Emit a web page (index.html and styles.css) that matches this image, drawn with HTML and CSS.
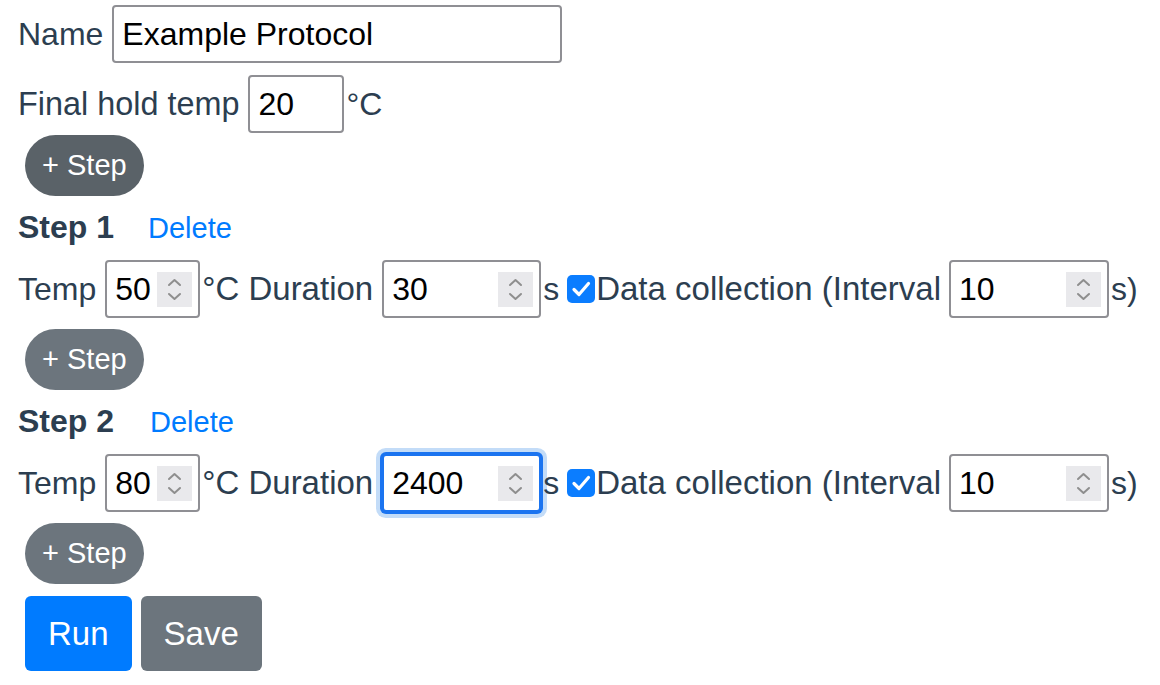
FILE: index.html
```html
<!DOCTYPE html>
<html lang="en">
<head>
<meta charset="utf-8">
<title>Protocol editor</title>
<link rel="stylesheet" href="styles.css">
</head>
<body>
<div class="app">
  <div class="row first">
    <span class="label">Name</span>
    <span class="field field-name"><input class="field-input" type="text" value="Example Protocol"></span>
  </div>
  <div class="row">
    <span class="label label-hold">Final hold temp</span>
    <span class="field field-hold"><input class="field-input" type="text" value="20"></span>
    <span class="unit">°C</span>
  </div>
  <button class="btn-step btn-step-active">+ Step</button>

  <div class="step">
    <div class="step-head">
      <span class="step-title">Step 1</span>
      <button class="btn-link">Delete</button>
    </div>
    <div class="row">
      <span class="label">Temp</span>
      <span class="field field-temp"><input class="field-input" type="text" value="50"><span class="spin"><svg viewBox="0 0 35 35" width="35" height="35"><path d="M12 13 L17.5 8 L23 13 M12 22 L17.5 27 L23 22" fill="none" stroke="#8e8e8e" stroke-width="2" stroke-linecap="round" stroke-linejoin="round"/></svg></span></span>
      <span class="unit unit-wide">°C Duration</span>
      <span class="field field-dur"><input class="field-input" type="text" value="30"><span class="spin"><svg viewBox="0 0 35 35" width="35" height="35"><path d="M12 13 L17.5 8 L23 13 M12 22 L17.5 27 L23 22" fill="none" stroke="#8e8e8e" stroke-width="2" stroke-linecap="round" stroke-linejoin="round"/></svg></span></span>
      <span class="unit">s</span>
      <span class="check"><svg viewBox="0 0 28 28" width="28" height="28"><path d="M7 14.5 L12 19.5 L21.5 8.5" fill="none" stroke="#fff" stroke-width="3.2" stroke-linecap="round" stroke-linejoin="round"/></svg></span>
      <span class="unit unit-wide unit-tight">Data collection (Interval</span>
      <span class="field field-int"><input class="field-input" type="text" value="10"><span class="spin"><svg viewBox="0 0 35 35" width="35" height="35"><path d="M12 13 L17.5 8 L23 13 M12 22 L17.5 27 L23 22" fill="none" stroke="#8e8e8e" stroke-width="2" stroke-linecap="round" stroke-linejoin="round"/></svg></span></span>
      <span class="unit">s)</span>
    </div>
    <button class="btn-step">+ Step</button>
  </div>

  <div class="step">
    <div class="step-head">
      <span class="step-title">Step 2</span>
      <button class="btn-link btn-link-2">Delete</button>
    </div>
    <div class="row">
      <span class="label">Temp</span>
      <span class="field field-temp"><input class="field-input" type="text" value="80"><span class="spin"><svg viewBox="0 0 35 35" width="35" height="35"><path d="M12 13 L17.5 8 L23 13 M12 22 L17.5 27 L23 22" fill="none" stroke="#8e8e8e" stroke-width="2" stroke-linecap="round" stroke-linejoin="round"/></svg></span></span>
      <span class="unit unit-wide">°C Duration</span>
      <span class="field field-dur field-focus"><input class="field-input" type="text" value="2400"><span class="spin"><svg viewBox="0 0 35 35" width="35" height="35"><path d="M12 13 L17.5 8 L23 13 M12 22 L17.5 27 L23 22" fill="none" stroke="#8e8e8e" stroke-width="2" stroke-linecap="round" stroke-linejoin="round"/></svg></span></span>
      <span class="unit">s</span>
      <span class="check"><svg viewBox="0 0 28 28" width="28" height="28"><path d="M7 14.5 L12 19.5 L21.5 8.5" fill="none" stroke="#fff" stroke-width="3.2" stroke-linecap="round" stroke-linejoin="round"/></svg></span>
      <span class="unit unit-wide unit-tight">Data collection (Interval</span>
      <span class="field field-int"><input class="field-input" type="text" value="10"><span class="spin"><svg viewBox="0 0 35 35" width="35" height="35"><path d="M12 13 L17.5 8 L23 13 M12 22 L17.5 27 L23 22" fill="none" stroke="#8e8e8e" stroke-width="2" stroke-linecap="round" stroke-linejoin="round"/></svg></span></span>
      <span class="unit">s)</span>
    </div>
    <button class="btn-step">+ Step</button>
  </div>

  <div class="actions">
    <button class="btn btn-primary">Run</button>
    <button class="btn btn-secondary">Save</button>
  </div>
</div>
</body>
</html>
```

FILE: styles.css
```css
* {
  box-sizing: border-box;
}

html, body {
  margin: 0;
  background: #ffffff;
}

body {
  font-family: "Liberation Sans", Arial, sans-serif;
  font-size: 32px;
  color: #2c3e50;
}

.app {
  padding: 5px 0 0 18px;
  display: flex;
  flex-direction: column;
  align-items: flex-start;
}

.row {
  display: flex;
  align-items: center;
  height: 58px;
  margin-top: 12px;
  white-space: nowrap;
}

.row.first {
  margin-top: 0;
}

.label {
  margin-right: 9px;
}

.label-hold {
  font-size: 32.4px;
}

.unit {
  margin-left: 2px;
}

.unit-wide {
  font-size: 33px;
}

.unit-tight {
  margin-left: 1px;
}

.field {
  display: flex;
  align-items: center;
  height: 58px;
  border: 2px solid #8f8f94;
  border-radius: 4px;
  background: #fff;
  padding: 0 6px 0 8px;
}

.field-input {
  flex: 1;
  min-width: 0;
  border: 0;
  outline: none;
  padding: 0;
  margin: 0;
  font-family: inherit;
  font-size: 32px;
  color: #000;
  background: transparent;
}

.field-name { width: 450px; }
.field-hold { width: 96px; }
.field-temp { width: 95px; }
.field-dur { width: 159px; margin-left: 9px; }
.field-int { width: 160px; margin-left: 8px; }

.field-focus {
  border-color: #1b74f0;
  box-shadow: 0 0 0 2px #1b74f0, 0 0 0 6px #c3dcf8;
}

.spin {
  flex: none;
  width: 35px;
  height: 35px;
  background: #e9e9ec;
  display: flex;
}

.check {
  flex: none;
  width: 28px;
  height: 28px;
  margin-left: 8px;
  border-radius: 5px;
  background: #0b7dff;
  display: flex;
}

.btn-step {
  margin: 2px 0 0 7px;
  height: 61px;
  padding: 0 16px;
  border: 1px solid transparent;
  border-radius: 31px;
  background: #6c757d;
  color: #fff;
  font-family: inherit;
  font-size: 29px;
}

.btn-step-active {
  background: #5a6268;
}

.step {
  display: flex;
  flex-direction: column;
  align-items: flex-start;
}

.step .row {
  margin-top: 14px;
}

.step .btn-step {
  margin-top: 11px;
}

.step-head {
  display: flex;
  align-items: baseline;
  margin-top: 12px;
  line-height: 38px;
}

.step-title {
  font-weight: bold;
  font-size: 32px;
}

.btn-link {
  margin-left: 34px;
  padding: 0;
  border: 0;
  background: none;
  color: #007bff;
  font-family: inherit;
  font-size: 29px;
}

.btn-link-2 {
  margin-left: 36px;
}

.actions {
  display: flex;
  gap: 9px;
  margin: 12px 0 0 7px;
}

.btn {
  height: 75px;
  padding: 0 22px;
  border: 1px solid transparent;
  border-radius: 6px;
  color: #fff;
  font-family: inherit;
  font-size: 33px;
}

.btn-primary {
  background: #007bff;
}

.btn-secondary {
  background: #6c757d;
}
```
